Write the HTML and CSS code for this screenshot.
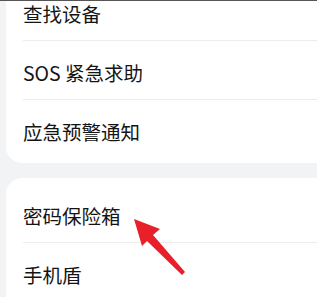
FILE: index.html
```html
<!DOCTYPE html>
<html lang="zh-CN">
  <head>
    <meta charset="UTF-8" />
    <meta name="viewport" content="width=device-width, initial-scale=1.0" />
    <title>设置</title>
    <link rel="stylesheet" href="styles.css">
  </head>
  <body>
    <div class="topline"></div>
    <div class="page">
      <div class="card card-top">
        <div class="row">查找设备</div>
        <div class="row">SOS 紧急求助</div>
        <div class="row">应急预警通知</div>
      </div>

      <div class="card card-bottom">
        <div class="row">密码保险箱</div>
        <div class="row">手机盾</div>
      </div>
    </div>

    <svg class="arrow" width="317" height="297" viewBox="0 0 317 297">
      <polygon points="134,219 160,229 153,235 185,272 182,275 147,241 142,246" fill="#e8202a" />
    </svg>
  </body>
</html>
```

FILE: styles.css
```css
body {
  margin: 0;
  padding: 0;
  background-color: #f1f3f5;
  font-family: "Noto Sans CJK SC", "Noto Sans", sans-serif;
  overflow: hidden;
  height: 297px;
  position: relative;
}
.topline {
  height: 1px;
  background-color: #555;
  position: relative;
  z-index: 2;
}
.page {
  padding-left: 6px;
  margin-top: -19px;
}
.card {
  background-color: #fff;
  padding-left: 17px;
}
.card-top {
  border-bottom-left-radius: 16px;
  padding-bottom: 4px;
}
.card-bottom {
  margin-top: 15px;
  border-top-left-radius: 16px;
  padding-top: 6px;
}
.row {
  height: 59px;
  display: flex;
  align-items: center;
  padding-top: 4px;
  box-sizing: border-box;
  font-size: 19.5px;
  color: #141414;
  border-bottom: 1px solid #ececec;
}
.row:last-child {
  border-bottom: none;
}
.arrow {
  position: absolute;
  left: 0;
  top: 0;
}
```
